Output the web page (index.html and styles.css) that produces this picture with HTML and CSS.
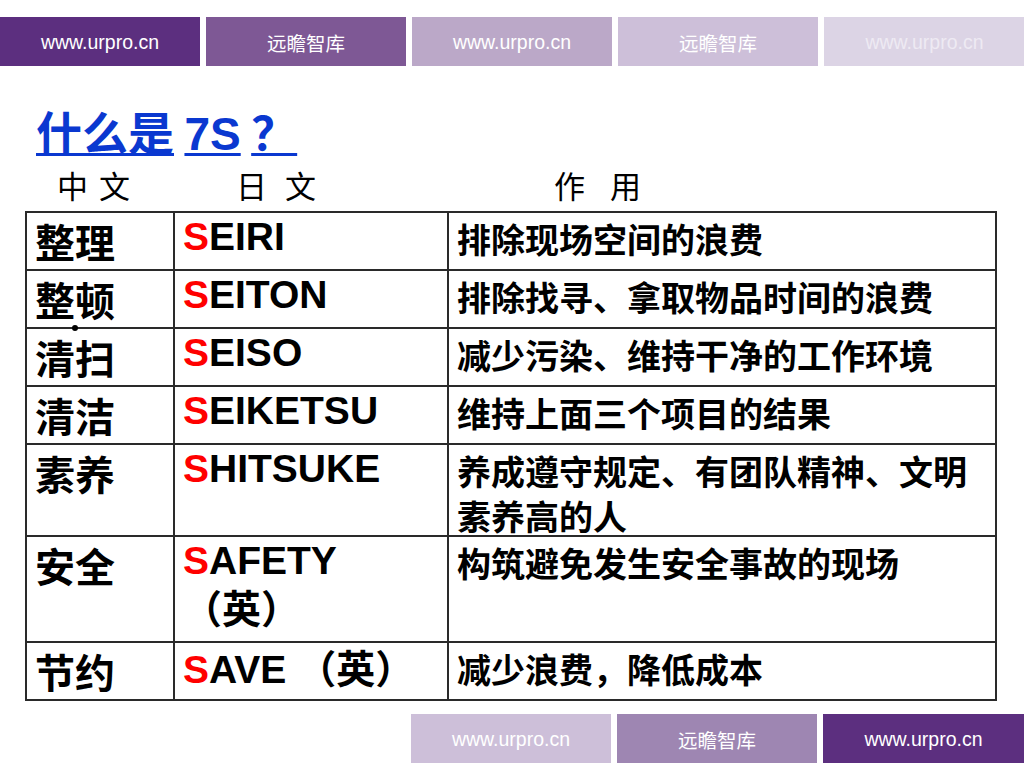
FILE: index.html
```html
<!DOCTYPE html>
<html lang="zh-CN">
<head>
<meta charset="utf-8">
<title>什么是7S？</title>
<link rel="stylesheet" href="styles.css">
</head>
<body>
<div class="page">
  <div class="bars top-bars">
    <div class="bar c1">www.urpro.cn</div>
    <div class="bar c2">远瞻智库</div>
    <div class="bar c3">www.urpro.cn</div>
    <div class="bar c4">远瞻智库</div>
    <div class="bar c5">www.urpro.cn</div>
  </div>

  <h1 class="title"><span class="u">什么是</span> <span class="u en">7S</span> <span class="u">？</span></h1>

  <div class="heads">
    <span class="h h-zh">中文</span>
    <span class="h h-ja">日文</span>
    <span class="h h-use">作用</span>
  </div>

  <div class="grid">
    <div class="cell zh">整理</div>
    <div class="cell ja"><span class="s">S</span>EIRI</div>
    <div class="cell use">排除现场空间的浪费</div>

    <div class="cell zh">整顿<span class="dot"></span></div>
    <div class="cell ja"><span class="s">S</span>EITON</div>
    <div class="cell use">排除找寻、拿取物品时间的浪费</div>

    <div class="cell zh">清扫</div>
    <div class="cell ja"><span class="s">S</span>EISO</div>
    <div class="cell use">减少污染、维持干净的工作环境</div>

    <div class="cell zh">清洁</div>
    <div class="cell ja"><span class="s">S</span>EIKETSU</div>
    <div class="cell use">维持上面三个项目的结果</div>

    <div class="cell zh">素养</div>
    <div class="cell ja"><span class="s">S</span>HITSUKE</div>
    <div class="cell use">养成遵守规定、有团队精神、文明素养高的人</div>

    <div class="cell zh">安全</div>
    <div class="cell ja"><span class="s">S</span>AFETY <span class="note">（英）</span></div>
    <div class="cell use">构筑避免发生安全事故的现场</div>

    <div class="cell zh">节约</div>
    <div class="cell ja"><span class="s">S</span>AVE <span class="note">（英）</span></div>
    <div class="cell use">减少浪费，降低成本</div>
  </div>

  <div class="bars bottom-bars">
    <div class="bar c4">www.urpro.cn</div>
    <div class="bar c6">远瞻智库</div>
    <div class="bar c1">www.urpro.cn</div>
  </div>
</div>
</body>
</html>
```

FILE: styles.css
```css
html, body {
  margin: 0;
  padding: 0;
  background: #ffffff;
}

.page {
  width: 1024px;
  height: 768px;
  overflow: hidden;
  display: flex;
  flex-direction: column;
  font-family: "Liberation Sans", "Noto Sans CJK SC", sans-serif;
  color: #000;
}

.bars {
  display: flex;
  gap: 6px;
  height: 49px;
  flex: 0 0 auto;
}

.top-bars {
  margin-top: 17px;
}

.bar {
  flex: 0 0 200px;
  display: flex;
  align-items: center;
  justify-content: center;
  color: #ffffff;
  font-size: 19.5px;
  padding-top: 2px;
  box-sizing: border-box;
}

.top-bars .bar:last-child,
.bottom-bars .bar:last-child {
  flex-basis: 201px;
}

.c1 { background: #5c2f7f; }
.c2 { background: #7e5895; }
.c3 { background: #bba8c8; }
.c4 { background: #cdbfd9; }
.c5 { background: #dcd4e5; color: #eeeaf3; }
.c6 { background: #9e86b2; }

.title {
  margin: 37px 0 0 36px;
  height: 55px;
  flex: 0 0 auto;
  font-family: "Noto Sans CJK SC", sans-serif;
  font-size: 46px;
  font-weight: 700;
  line-height: 55px;
  color: #0a38d0;
  white-space: pre;
}

.title .u {
  text-decoration: underline;
  text-decoration-thickness: 3px;
  text-underline-offset: 3px;
}

.title .en {
  font-family: "Liberation Sans", sans-serif;
}

.heads {
  display: flex;
  margin-top: 8px;
  height: 37px;
  flex: 0 0 auto;
  font-family: "Noto Sans CJK SC", sans-serif;
  font-size: 31px;
  line-height: 37px;
  font-weight: 400;
}

.h-zh {
  margin-left: 57px;
  letter-spacing: 11px;
}

.h-ja {
  margin-left: 95px;
  letter-spacing: 18px;
}

.h-use {
  margin-left: 220px;
  letter-spacing: 25px;
}

.grid {
  margin: 8px 0 0 25px;
  width: 972px;
  box-sizing: border-box;
  display: grid;
  grid-template-columns: 146px 272px 546px;
  grid-template-rows: 56px 56px 56px 56px 90px 104px 56px;
  gap: 2px;
  padding: 2px;
  background: #2a2a2a;
  flex: 0 0 auto;
}

.cell {
  background: #ffffff;
  padding: 0 8px;
  font-weight: 700;
  min-width: 0;
}

.zh {
  position: relative;
  font-family: "Noto Sans CJK SC", sans-serif;
  font-size: 40px;
  line-height: 46px;
  padding-top: 5px;
}

.ja {
  font-family: "Liberation Sans", "Noto Sans CJK SC", sans-serif;
  font-size: 39px;
  line-height: 46px;
  padding-top: 1px;
}

.ja .s {
  color: #ff0000;
}

.ja .note {
  line-height: 52px;
}

.use {
  font-family: "Noto Sans CJK SC", sans-serif;
  font-size: 34px;
  line-height: 45px;
  padding-top: 3px;
}

.dot {
  position: absolute;
  z-index: 1;
  left: 45px;
  bottom: -4px;
  width: 6px;
  height: 6px;
  border-radius: 50%;
  background: #000;
}

.bottom-bars {
  margin-top: 13px;
  justify-content: flex-end;
}
```
